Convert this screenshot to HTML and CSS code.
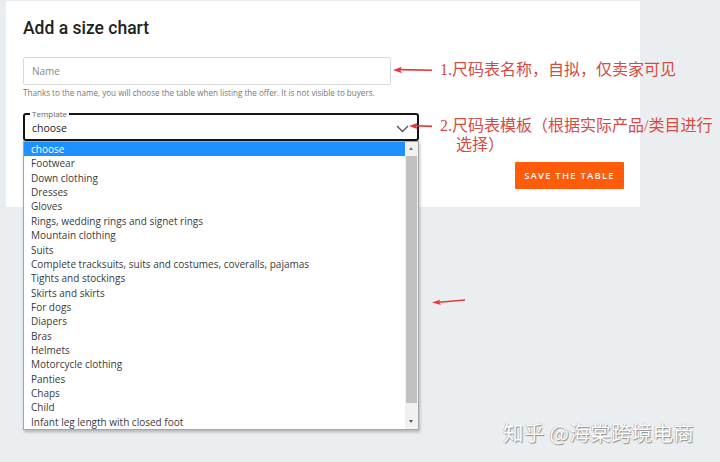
FILE: index.html
```html
<!DOCTYPE html>
<html>
<head>
<meta charset="utf-8">
<link rel="stylesheet" href="styles.css">
</head>
<body>
<div class="page">
  <div class="card">
    <h1 class="title">Add a size chart</h1>
    <div class="name-input">Name</div>
    <p class="helper">Thanks to the name, you will choose the table when listing the offer. It is not visible to buyers.</p>
    <div class="select-wrap">
      <div class="select">
        <span class="legend">Template</span>
        <span class="value">choose</span>
        <svg class="chevron" width="13" height="8" viewBox="0 0 13 8"><path d="M1 1 L6.5 6.5 L12 1" fill="none" stroke="#555" stroke-width="1.4"/></svg>
      </div>
      <div class="dropdown">
        <ul class="options">
          <li class="selected">choose</li>
          <li>Footwear</li>
          <li>Down clothing</li>
          <li>Dresses</li>
          <li>Gloves</li>
          <li>Rings, wedding rings and signet rings</li>
          <li>Mountain clothing</li>
          <li>Suits</li>
          <li>Complete tracksuits, suits and costumes, coveralls, pajamas</li>
          <li>Tights and stockings</li>
          <li>Skirts and skirts</li>
          <li>For dogs</li>
          <li>Diapers</li>
          <li>Bras</li>
          <li>Helmets</li>
          <li>Motorcycle clothing</li>
          <li>Panties</li>
          <li>Chaps</li>
          <li>Child</li>
          <li>Infant leg length with closed foot</li>
        </ul>
        <div class="scrollbar">
          <div class="sb-arrow up"></div>
          <div class="sb-thumb"></div>
          <div class="sb-arrow down"></div>
        </div>
      </div>
    </div>
    <div class="actions">
      <button class="save">SAVE THE TABLE</button>
    </div>
  </div>

  <div class="note note1">
    <svg class="arrow" width="42" height="8" viewBox="0 0 42 8"><path d="M40 4.2 L8 3.6" stroke="#e03a3a" stroke-width="1.6" fill="none"/><path d="M1 4 L10 0.8 L8 4 L10 7.2 Z" fill="#e03a3a"/></svg>
    <span>1.尺码表名称，自拟，仅卖家可见</span>
  </div>
  <div class="note note2">
    <svg class="arrow" width="26" height="8" viewBox="0 0 26 8"><path d="M24 4.4 L8 3.8" stroke="#e03a3a" stroke-width="1.6" fill="none"/><path d="M1 4 L10 0.8 L8 4 L10 7.2 Z" fill="#e03a3a"/></svg>
    <span>2.尺码表模板（根据实际产品/类目进行<br><span class="indent">选择）</span></span>
  </div>
  <svg class="arrow3" width="36" height="8" viewBox="0 0 36 8"><path d="M34 2 L8 4.2" stroke="#e03a3a" stroke-width="1.5" fill="none"/><path d="M1 4.6 L9 1.8 L8 4.4 L10 7 Z" fill="#e03a3a"/></svg>

  <div class="watermark">知乎 @海棠跨境电商</div>
</div>
</body>
</html>
```

FILE: styles.css
```css
* { box-sizing: border-box; }
html, body { margin: 0; padding: 0; }
body {
  background: #ebeef1;
  font-family: "Open Sans", "Noto Sans", sans-serif;
  width: 720px;
  height: 462px;
  overflow: hidden;
}
.page {
  position: relative;
  width: 720px;
  height: 462px;
  padding-top: 1px;
}
.card {
  margin-left: 6px;
  width: 634px;
  height: 206px;
  background: #fff;
  padding: 16px 0 0 17px;
}
.title {
  margin: 0;
  font-family: "Roboto", sans-serif;
  font-weight: 500;
  font-size: 17.5px;
  line-height: 22px;
  color: #222;
}
.name-input {
  margin-top: 18px;
  width: 368px;
  height: 28px;
  border: 1px solid #d9d9d9;
  border-radius: 2px;
  padding-left: 8px;
  font-size: 10px;
  line-height: 26px;
  color: #888;
}
.helper {
  margin: 3px 0 0 0;
  font-size: 8.1px;
  line-height: 10px;
  color: #777;
}
.select-wrap {
  position: relative;
  margin-top: 15px;
  width: 396px;
}
.select {
  position: relative;
  height: 28px;
  border: 2px solid #151515;
  border-radius: 3px;
  padding-left: 7px;
  display: flex;
  align-items: center;
}
.legend {
  position: absolute;
  top: -6px;
  left: 5px;
  background: #fff;
  padding: 0 2px;
  font-size: 8px;
  line-height: 9px;
  color: #666;
}
.value {
  font-size: 10.5px;
  color: #222;
  margin-top: 2px;
}
.chevron {
  position: absolute;
  right: 8px;
  top: 10px;
}
.dropdown {
  position: absolute;
  top: 28px;
  left: 0;
  width: 396px;
  height: 289px;
  background: #fff;
  border: 1px solid #a6a6a6;
  box-shadow: 1px 2px 3px rgba(0,0,0,0.25);
  display: flex;
  z-index: 5;
}
.options {
  list-style: none;
  margin: 0;
  padding: 0;
  flex: 1;
}
.options li {
  height: 14.37px;
  line-height: 14.37px;
  padding-left: 7px;
  font-size: 10px;
  color: #3a3a3a;
  white-space: nowrap;
}
.options li.selected {
  background: #1e90ff;
  color: #fff;
}
.scrollbar {
  width: 13px;
  background: #f1f1f1;
  display: flex;
  flex-direction: column;
  align-items: stretch;
}
.sb-arrow {
  height: 14px;
  position: relative;
}
.sb-arrow::after {
  content: "";
  position: absolute;
  left: 4px;
  top: 5px;
  border-left: 2.5px solid transparent;
  border-right: 2.5px solid transparent;
}
.sb-arrow.up::after { border-bottom: 3px solid #777; }
.sb-arrow.down::after { border-top: 3px solid #555; }
.sb-thumb {
  flex: 1;
  background: #c1c1c1;
  margin: 0 1px 12px 1px;
}
.actions {
  display: flex;
  justify-content: flex-end;
  width: 601px;
  margin-top: 21px;
}
.save {
  width: 109px;
  height: 27px;
  border: none;
  border-radius: 1px;
  background: #fe5b0a;
  color: #fff;
  font-family: "Open Sans", sans-serif;
  font-weight: 600;
  font-size: 9.5px;
  letter-spacing: 1.2px;
  padding: 0;
}
.note {
  position: absolute;
  display: flex;
  align-items: flex-start;
  color: #d54a45;
  font-family: "Liberation Serif", "Noto Sans CJK SC", serif;
  font-size: 16px;
  line-height: 19px;
}
.note .arrow { flex: none; margin-top: 6px; }
.note1 { left: 392px; top: 60px; }
.note1 .arrow { margin-right: 6px; }
.note2 { left: 408px; top: 116px; }
.note2 .arrow { margin-right: 6px; }
.indent { padding-left: 16px; }
.arrow3 { position: absolute; left: 431px; top: 298px; }
.watermark {
  position: absolute;
  left: 503px;
  top: 419px;
  font-family: "Noto Sans CJK SC", sans-serif;
  font-size: 20.5px;
  line-height: 26px;
  color: #fff;
  text-shadow: 1px 1px 1px #8a8a8a, -0.5px -0.5px 0.5px #a0a0a0;
  letter-spacing: 0.3px;
}
```
